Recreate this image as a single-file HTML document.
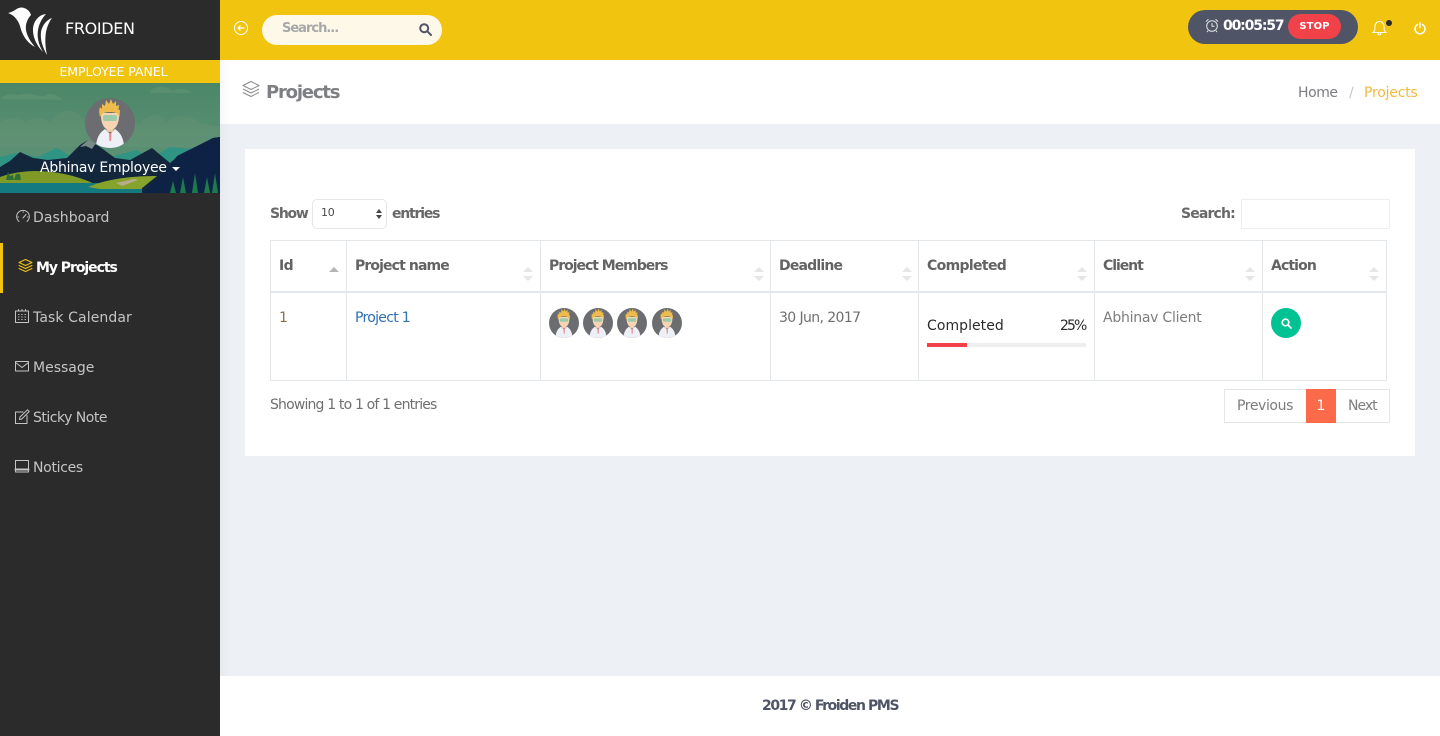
<!DOCTYPE html>
<html lang="en"><head><meta charset="utf-8"><title>Projects</title>
<style>
*{box-sizing:border-box}
html,body{margin:0;padding:0;width:1440px;height:736px;overflow:hidden;background:#edf1f5;font-family:"DejaVu Sans","Liberation Sans",sans-serif;font-size:14px;color:#686868}
.a{position:absolute}
.t{position:absolute;white-space:nowrap;line-height:20px}
.b{font-weight:600}
.nav{color:#c4c4c4;font-size:14px}
.ln{position:absolute;background:#e4e7ea}
svg{position:absolute;display:block;overflow:visible}
.ic{fill:none;stroke:#c4c4c4;stroke-width:1;stroke-linecap:round;stroke-linejoin:round}
.th{font-size:14px;font-weight:700;color:#636363}
.s{position:absolute;width:10px;height:14px}
.s:before,.s:after{content:"";position:absolute;left:0;border-left:5px solid transparent;border-right:5px solid transparent}
.s:before{top:0;border-bottom:5px solid #e6e6e6}
.s:after{bottom:0;border-top:5px solid #e6e6e6}
</style></head>
<body>
<svg width="0" height="0" style="position:absolute"><defs>
<g id="av">
<circle cx="25" cy="25" r="25" fill="#6c6d71"/>
<clipPath id="avc"><circle cx="25" cy="25" r="25"/></clipPath>
<g clip-path="url(#avc)">
<path d="M11 50C11 41 14 35 20 31L25 36L30 31C36 35 39 41 39 50Z" fill="#eef0f8"/>
<path d="M24 35h2.500l-.5 8h-1.500z" fill="#e88a8a"/>
<rect x="21.500" y="26" width="7" height="8" fill="#f0c6a4"/>
<path d="M16 15C15.500 27 20 32 25 32S34.500 27 34 15Z" fill="#f6d4b4"/>
<path d="M15 19C14 15 14 12 15 9L17 11L17 6L20 8L21 2L24 6L26 1L28 6L31 3L31 8L34 7L33.500 12L35 12L34.500 19C33 15 30 14 25 14S17 15 15 19Z" fill="#eebc4c"/>
<rect x="18" y="17" width="14" height="6" rx="2" fill="#9bcba8"/>
</g></g>
</defs></svg>

<!-- page surfaces -->
<div class="a" style="left:220px;top:0;width:1220px;height:60px;background:#f1c410"></div>
<div class="a" style="left:220px;top:60px;width:1220px;height:64px;background:#fff"></div>
<div class="a" style="left:220px;top:60px;width:10px;height:676px;background:linear-gradient(90deg,rgba(0,0,0,.03),rgba(0,0,0,0))"></div>
<div class="a" style="left:245px;top:149px;width:1170px;height:307px;background:#fff"></div>
<div class="a" style="left:220px;top:676px;width:1220px;height:60px;background:#fff"></div>

<!-- sidebar -->
<div class="a" style="left:0;top:0;width:220px;height:736px;background:#2b2b2b"></div>
<svg style="left:0;top:0" width="60" height="60" fill="#fff">
<path d="M8 13C14 12 16 8 21 7.500C26 7.500 30 11 31 15C28 18 25 24 26 30C27 36 30 41 35 47C26 42 22 34 20 26C18 20 14 15 8 13Z"/>
<path d="M46 14C38 15 33 22 33 30C33 38 37 46 43 52C38 44 37 36 38 30C39 24 42 18 46 14Z"/>
<path d="M52 18C46 20 42 26 41 32C40 40 43 48 47 55C45 46 45 38 46 32C47 27 49 22 52 18Z"/>
</svg>
<div class="t" style="left:65px;top:19px;color:#fff;font-size:16px;letter-spacing:-.35px">FROIDEN</div>
<div class="a" style="left:0;top:60px;width:220px;height:23px;background:#f1c410"></div>
<div class="t" style="left:0;top:62px;width:227px;text-align:center;color:#fff;font-size:12.500px;letter-spacing:-.05px">EMPLOYEE PANEL</div>

<svg style="left:0;top:83px" width="220" height="110" viewBox="0 0 220 110">
<defs><linearGradient id="sky" x1="0" y1="0" x2="0" y2="1"><stop offset="0" stop-color="#4c8768"/><stop offset=".65" stop-color="#5a9074"/></linearGradient><clipPath id="bn"><rect width="220" height="110"/></clipPath></defs>
<g clip-path="url(#bn)">
<rect width="220" height="110" fill="url(#sky)"/>
<path d="M0 16C8 8 14 12 20 12C28 8 36 14 44 13C50 8 58 12 62 17Z" fill="#74a07c" opacity=".3"/>
<path d="M150 8C156 2 166 2 172 8C180 4 188 6 192 10H150Z" fill="#74a07c" opacity=".3"/>
<path d="M0 40C8 32 18 34 26 40C34 32 44 34 50 40C58 26 76 22 84 38L96 42C110 34 130 34 140 42C146 30 160 28 166 40C176 30 192 32 200 40L220 44V64H0Z" fill="#7a9c7a" opacity=".22"/>
<path d="M0 74L16 70L38 74L57 65L72 74L90 66L110 74L137 67L150 76L170 64L190 66L220 58V110H0Z" fill="#2f9484"/>
<path d="M0 84L10 78L20 69L33 75L48 77L67 75L80 62L88 57L100 64L115 75L130 77L152 65L170 80L177 74L190 68L213 55L220 54V110H0Z" fill="#12263c"/>
<path d="M80 64L88 57L96 60L92 66L86 63Z" fill="#7a8a84"/>
<path d="M143 110L170 83L177 73L213 55L220 54V110Z" fill="#0d2245"/>
<path d="M0 94C10 90 25 88 35 88C55 88 75 92 95 101H0Z" fill="#7f9a26"/>
<rect x="0" y="100" width="142" height="10" fill="#127a80"/>
<path d="M88 104C105 97 125 93 157 93L141 106H100Z" fill="#86a32c"/>
<path d="M170 110l3-12 3 12zM180 110l3-16 3 16zM192 110l3-20 3 20zM204 110l3-16 3 16zM212 110l3-20 3 20z" fill="#1c7a4c"/>
<path d="M6 97l2-8 2 4 3-1 1 5zM14 97l2-6 4 0 1 6z" fill="#2e6f38"/>
<path d="M116 100l18-4 4 1-16 6z" fill="#b7ad8c"/>
</g></svg>
<svg style="left:85px;top:98px" width="50" height="50" viewBox="0 0 50 50"><use href="#av"/></svg>
<div class="t" style="left:40px;top:158px;color:#fff;font-size:14px;letter-spacing:-.25px">Abhinav Employee</div>
<div class="a" style="left:172px;top:167px;border-left:4px solid transparent;border-right:4px solid transparent;border-top:4px solid #fff"></div>

<div class="a" style="left:0;top:243px;width:3px;height:50px;background:#f1c410"></div>

<svg class="ic" style="left:15px;top:209px" width="16" height="16"><path d="M4 12.500C1 10 1 5.500 3.500 3.200C6 .8 10 .8 12.500 3.200C15 5.500 15 10 12 12.500"/><path d="M8 9L11 5.500"/><path d="M3 8H3.500M8 3H8.500M12.500 8H13"/></svg>
<div class="t nav" style="left:33px;top:208px;letter-spacing:.05px">Dashboard</div>
<svg class="ic" style="left:18px;top:259px;stroke:#f1c410" width="15" height="14"><path d="M7.500 .5L14 3.500L7.500 6.500L1 3.500Z"/><path d="M1 6.500L7.500 9.500L14 6.500"/><path d="M1 9.500L7.500 12.500L14 9.500"/></svg>
<div class="t b" style="left:36px;top:258px;color:#fff;letter-spacing:-1.05px">My Projects</div>
<svg class="ic" style="left:15px;top:309px" width="14" height="14"><rect x=".5" y="2" width="13" height="11.500"/><path d="M3.500 .5V2M7 .5V2M10.500 .5V2"/><path d="M3.500 5.500H4M6.700 5.500H7.200M10 5.500H10.500M3.500 8H4M6.700 8H7.200M10 8H10.500M3.500 10.500H4M6.700 10.500H7.200M10 10.500H10.500"/></svg>
<div class="t nav" style="left:33px;top:308px;letter-spacing:.1px">Task Calendar</div>
<svg class="ic" style="left:15px;top:361px" width="14" height="11"><rect x=".5" y=".5" width="13" height="9.500"/><path d="M.5 1.500L7 6.500L13.500 1.500"/></svg>
<div class="t nav" style="left:33px;top:358px;letter-spacing:0">Message</div>
<svg class="ic" style="left:15px;top:409px" width="15" height="15"><path d="M8 3H.5V14.500H12V6.500"/><path d="M4.500 10.500L5 8L12.500 .8L14.200 2.500L6.800 10Z"/></svg>
<div class="t nav" style="left:33px;top:408px;letter-spacing:-.5px">Sticky Note</div>
<svg class="ic" style="left:15px;top:460px" width="14" height="13"><rect x=".5" y=".5" width="13" height="11.500"/><path d="M.5 9.500H13.500" stroke-width="2"/></svg>
<div class="t nav" style="left:33px;top:458px;letter-spacing:-.3px">Notices</div>

<!-- topbar -->
<svg style="left:234px;top:21px;fill:none;stroke:#fff;stroke-width:1" width="14" height="14"><circle cx="7" cy="7" r="6.500"/><path d="M10.500 7H4M6.500 4.500L4 7L6.500 9.500" stroke-width="1.200"/></svg>
<div class="a" style="left:262px;top:15px;width:180px;height:30px;border-radius:15px;background:#fdf8e8"></div>
<div class="t b" style="left:282px;top:20px;color:#a6a8aa;font-size:13px;letter-spacing:-1px;line-height:18px">Search...</div>
<svg style="left:419px;top:23px;fill:none;stroke:#4f5467;stroke-width:2" width="13" height="13"><circle cx="5.200" cy="5.200" r="4"/><path d="M8.200 8.200L12 12" stroke-linecap="round"/></svg>

<div class="a" style="left:1188px;top:10px;width:170px;height:34px;border-radius:17px;background:#4f5467"></div>
<svg style="left:1205px;top:18px;fill:none;stroke:#e6e6e6;stroke-width:1" width="14" height="15"><circle cx="7" cy="8" r="5.300"/><path d="M7 5V8.300H9.500M1 3.500L3.500 1.200M13 3.500L10.500 1.200M3 12.800L2 14M11 12.800L12 14"/></svg>
<div class="t" style="left:1223px;top:16px;color:#fff;font-size:14px;font-weight:700;letter-spacing:-1.15px">00:05:57</div>
<div class="a" style="left:1288px;top:14px;width:53px;height:25px;border-radius:13px;background:#f1424a"></div>
<div class="t" style="left:1288px;top:17px;width:53px;text-align:center;color:#fff;font-size:10px;font-weight:700;letter-spacing:.1px">STOP</div>
<svg style="left:1372px;top:20px;fill:none;stroke:#fff;stroke-width:1" width="15" height="16"><path d="M1 12.500C3 11 3 9 3 6.500C3 3.500 5 1.500 7.500 1.500S12 3.500 12 6.500C12 9 12 11 14 12.500Z"/><path d="M6 13C6 15.500 9 15.500 9 13"/></svg>
<div class="a" style="left:1386px;top:20px;width:6px;height:6px;border-radius:3px;background:#2b2b2b"></div>
<svg style="left:1414px;top:22px;fill:none;stroke:#fff;stroke-width:1.500;stroke-linecap:round" width="12" height="12"><path d="M3.500 2.500A5 5 0 1 0 8.500 2.500"/><path d="M6 .8V5.500"/></svg>

<!-- title row -->
<svg style="left:242px;top:81px;fill:none;stroke:#8a8a8a;stroke-width:1;stroke-linejoin:round" width="18" height="17"><path d="M9 .5L17 4.500L9 8.500L1 4.500Z"/><path d="M1 8L9 12L17 8"/><path d="M1 11.500L9 15.500L17 11.500"/></svg>
<div class="t b" style="left:266px;top:83px;color:#7d7f82;font-size:18px;letter-spacing:-1.2px">Projects</div>
<div class="t" style="left:1298px;top:83px;color:#7c7c80;font-size:14px;letter-spacing:-.45px">Home</div>
<div class="t" style="left:1349px;top:83px;color:#c4c8cc;font-size:14px">/</div>
<div class="t" style="left:1364px;top:83px;color:#f3b93f;font-size:14px;letter-spacing:-.2px">Projects</div>

<!-- table controls -->
<div class="t b" style="left:270px;top:204px;letter-spacing:-1.25px">Show</div>
<div class="a" style="left:312px;top:199px;width:75px;height:30px;border:1px solid #e4e7ea;border-radius:5px;background:#fff"></div>
<div class="t" style="left:321px;top:203px;color:#4a4a4a;font-size:11px;letter-spacing:-.2px">10</div>
<div class="a" style="left:376px;top:209px;border-left:3px solid transparent;border-right:3px solid transparent;border-bottom:4px solid #444"></div>
<div class="a" style="left:376px;top:215px;border-left:3px solid transparent;border-right:3px solid transparent;border-top:4px solid #444"></div>
<div class="t b" style="left:392px;top:204px;letter-spacing:-1.2px">entries</div>
<div class="t b" style="left:1181px;top:204px;letter-spacing:-.85px">Search:</div>
<div class="a" style="left:1241px;top:199px;width:149px;height:30px;border:1px solid #eceef0;background:#fff"></div>

<!-- table lines -->
<div class="ln" style="left:270px;top:240px;width:1117px;height:1px"></div>
<div class="ln" style="left:270px;top:291px;width:1117px;height:2px"></div>
<div class="ln" style="left:270px;top:380px;width:1117px;height:1px"></div>
<div class="ln" style="left:270px;top:240px;width:1px;height:141px"></div>
<div class="ln" style="left:346px;top:240px;width:1px;height:141px"></div>
<div class="ln" style="left:540px;top:240px;width:1px;height:141px"></div>
<div class="ln" style="left:770px;top:240px;width:1px;height:141px"></div>
<div class="ln" style="left:918px;top:240px;width:1px;height:141px"></div>
<div class="ln" style="left:1094px;top:240px;width:1px;height:141px"></div>
<div class="ln" style="left:1262px;top:240px;width:1px;height:141px"></div>
<div class="ln" style="left:1386px;top:240px;width:1px;height:141px"></div>

<!-- header -->
<div class="t th" style="left:279px;top:256px;letter-spacing:-.55px">Id</div>
<div class="a" style="left:329px;top:267px;border-left:5px solid transparent;border-right:5px solid transparent;border-bottom:5px solid #b6b6b6"></div>
<div class="t th" style="left:355px;top:256px;letter-spacing:-.88px">Project name</div><div class="s" style="left:523px;top:267px"></div>
<div class="t th" style="left:549px;top:256px;letter-spacing:-1.02px">Project Members</div><div class="s" style="left:754px;top:267px"></div>
<div class="t th" style="left:779px;top:256px;letter-spacing:-.8px">Deadline</div><div class="s" style="left:902px;top:267px"></div>
<div class="t th" style="left:927px;top:256px;letter-spacing:-.65px">Completed</div><div class="s" style="left:1077px;top:267px"></div>
<div class="t th" style="left:1103px;top:256px;letter-spacing:-1.05px">Client</div><div class="s" style="left:1245px;top:267px"></div>
<div class="t th" style="left:1271px;top:256px;letter-spacing:-.88px">Action</div><div class="s" style="left:1369px;top:267px"></div>

<!-- row -->
<div class="t" style="left:279px;top:308px;color:#8a6d4b">1</div>
<div class="t" style="left:355px;top:308px;color:#2f6fb5;letter-spacing:-.7px">Project 1</div>
<svg style="left:549px;top:308px" width="30" height="30" viewBox="0 0 50 50"><use href="#av"/></svg>
<svg style="left:583px;top:308px" width="30" height="30" viewBox="0 0 50 50"><use href="#av"/></svg>
<svg style="left:617px;top:308px" width="30" height="30" viewBox="0 0 50 50"><use href="#av"/></svg>
<svg style="left:652px;top:308px" width="30" height="30" viewBox="0 0 50 50"><use href="#av"/></svg>
<div class="t" style="left:779px;top:308px;color:#6f6f6f;letter-spacing:-.6px">30 Jun, 2017</div>
<div class="t" style="left:927px;top:316px;color:#2b2b2b;letter-spacing:.05px">Completed</div>
<div class="t" style="left:1060px;top:316px;color:#2b2b2b;letter-spacing:-1.9px">25%</div>
<div class="a" style="left:927px;top:343px;width:159px;height:4px;background:#eeeeee"></div>
<div class="a" style="left:927px;top:343px;width:40px;height:4px;background:#f1424a"></div>
<div class="t" style="left:1103px;top:308px;color:#7d7d7d;letter-spacing:-.25px">Abhinav Client</div>
<div class="a" style="left:1271px;top:308px;width:30px;height:30px;border-radius:15px;background:#00c292"></div>
<svg style="left:1281px;top:318px;fill:none;stroke:#fff;stroke-width:1.700" width="11" height="11"><circle cx="4.500" cy="4.500" r="3.300"/><path d="M7 7L10 10" stroke-linecap="round"/></svg>

<!-- footer of table -->
<div class="t" style="left:270px;top:395px;color:#6f6f6f;letter-spacing:-.83px">Showing 1 to 1 of 1 entries</div>
<div class="a" style="left:1224px;top:389px;width:166px;height:34px;border:1px solid #e4e7ea;background:#fff"></div>
<div class="t" style="left:1237px;top:396px;color:#7c7c7c;letter-spacing:-.4px">Previous</div>
<div class="a" style="left:1306px;top:389px;width:30px;height:34px;background:#fb6b4a"></div>
<div class="t" style="left:1306px;top:396px;width:30px;text-align:center;color:#fff">1</div>
<div class="t" style="left:1348px;top:396px;color:#7c7c7c;letter-spacing:-1px">Next</div>

<div class="t" style="left:762px;top:696px;color:#4f5467;font-size:14px;font-weight:600;letter-spacing:-1.4px">2017 © Froiden PMS</div>
</body></html>
